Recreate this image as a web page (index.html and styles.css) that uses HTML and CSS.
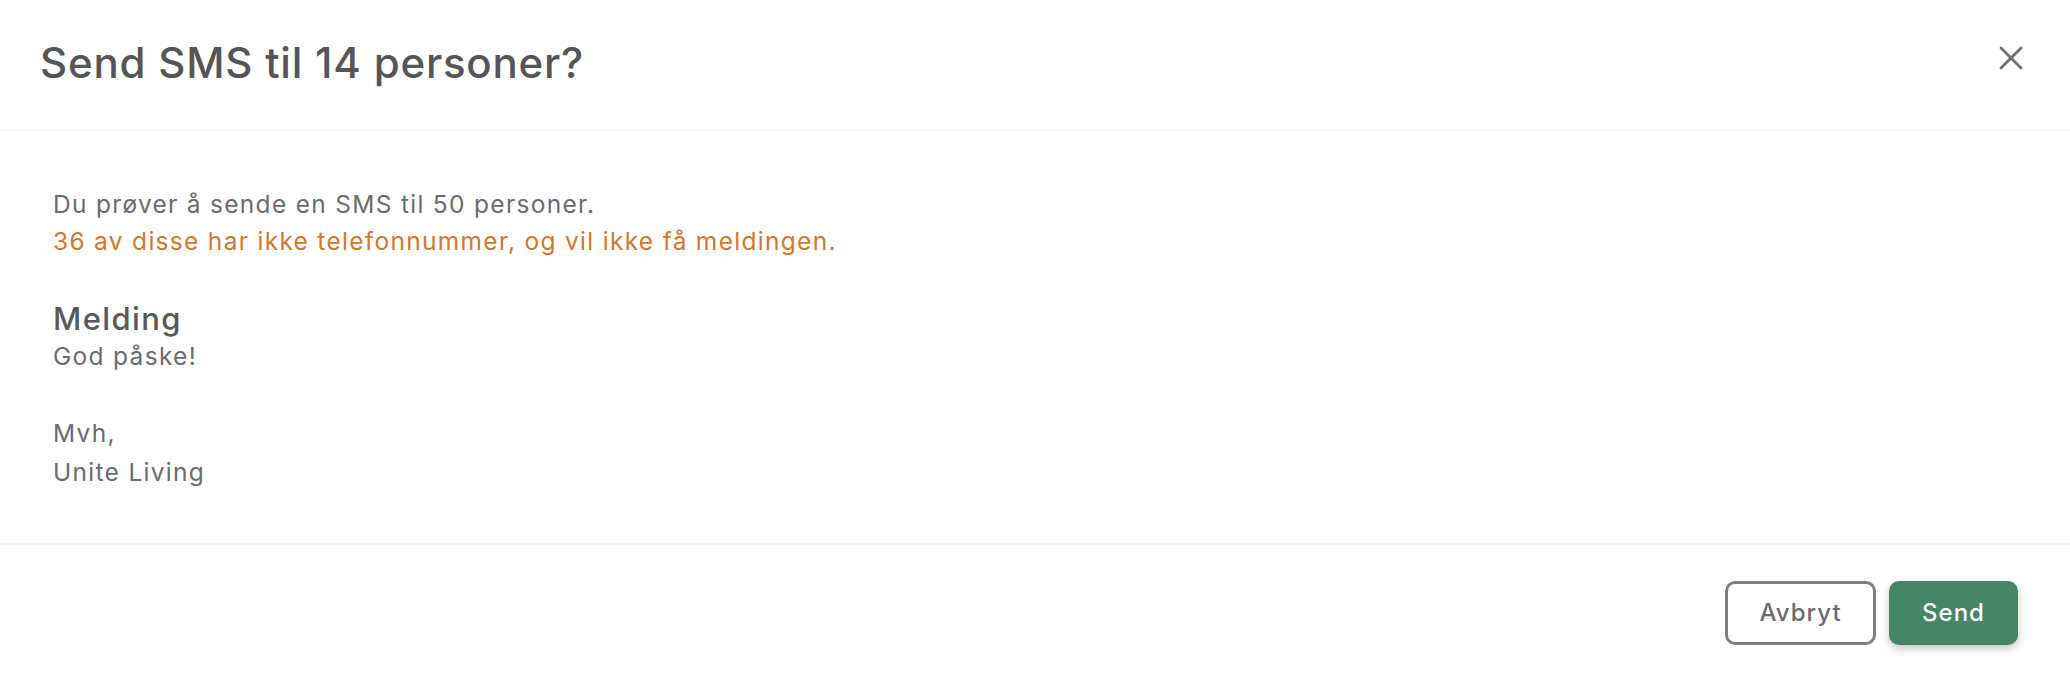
FILE: index.html
```html
<!DOCTYPE html>
<html lang="no">
<head>
  <meta charset="UTF-8">
  <meta name="viewport" content="width=device-width, initial-scale=1.0">
  <title>Send SMS</title>
  <link rel="stylesheet" href="styles.css">
</head>
<body>
  <div class="modal">
    <div class="modal-header">
      <h1 class="modal-title">Send SMS til 14 personer?</h1>
      <button class="close" aria-label="Lukk">
        <svg width="24" height="24" viewBox="0 0 24 24">
          <path d="M2 2 L22 22 M22 2 L2 22" stroke="#707072" stroke-width="2.8" stroke-linecap="round" fill="none"/>
        </svg>
      </button>
    </div>

    <div class="modal-body">
      <p class="info">Du prøver å sende en SMS til 50 personer.</p>
      <p class="warning">36 av disse har ikke telefonnummer, og vil ikke få meldingen.</p>

      <h2 class="section-title">Melding</h2>
      <p class="message">God påske!

Mvh,
Unite Living</p>
    </div>

    <div class="modal-footer">
      <button class="btn btn-outline">Avbryt</button>
      <button class="btn btn-primary">Send</button>
    </div>
  </div>
</body>
</html>
```

FILE: styles.css
```css
* {
  box-sizing: border-box;
  margin: 0;
  padding: 0;
}

body {
  font-family: 'Inter', 'Noto Sans', sans-serif;
  background-color: #ffffff;
  color: #6b6b70;
}

.modal {
  display: flex;
  flex-direction: column;
  height: 100vh;
  background-color: #ffffff;
}

.modal-header {
  height: 131px;
  padding: 0 47px 0 40px;
  display: flex;
  align-items: center;
  justify-content: space-between;
  border-bottom: 1px solid #f3f3f6;
}

.modal-title {
  font-size: 42px;
  font-weight: 500;
  letter-spacing: 0.8px;
  color: #555558;
  line-height: 1.2;
  margin-bottom: 4px;
}

.close {
  display: flex;
  background: none;
  border: none;
  cursor: pointer;
  margin-bottom: 15px;
}

.modal-body {
  flex: 1;
  padding: 55px 53px 0;
  font-size: 24.5px;
  line-height: 37px;
  letter-spacing: 1.3px;
}

.warning {
  color: #d0782e;
}

.section-title {
  margin-top: 41px;
  font-size: 31px;
  font-weight: 500;
  line-height: 36px;
  letter-spacing: 1.4px;
  color: #58585b;
}

.message {
  white-space: pre-line;
  line-height: 38.5px;
}

.modal-footer {
  height: 137px;
  border-top: 2px solid #f1f1f5;
  padding: 0 52px;
  display: flex;
  align-items: center;
  justify-content: flex-end;
  gap: 13px;
}

.btn {
  height: 64px;
  font-family: inherit;
  font-size: 24px;
  font-weight: 500;
  letter-spacing: 1px;
  border-radius: 10px;
  cursor: pointer;
}

.btn-outline {
  width: 151px;
  background-color: #ffffff;
  color: #6b6b70;
  border: 3px solid #808084;
}

.btn-primary {
  width: 129px;
  background-color: #478569;
  color: #ffffff;
  border: none;
  box-shadow: 0px 4px 10px rgba(0, 0, 0, 0.22);
}
```
